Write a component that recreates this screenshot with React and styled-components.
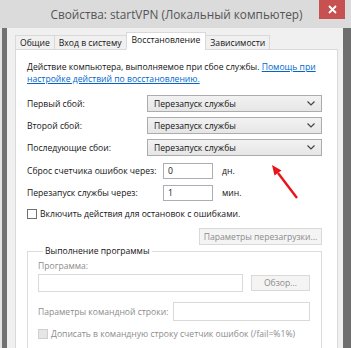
import React from 'react';
import styled, { createGlobalStyle } from 'styled-components';

const GlobalStyle = createGlobalStyle`
  html, body {
    margin: 0;
    padding: 0;
    background: #ffffff;
  }
  body {
    font-family: 'Open Sans', 'Noto Sans', sans-serif;
    font-size: 8.6px;
    color: #141414;
  }
`;

// --- window chrome ---
const Window = styled.div`
  width: 351px;
  height: 348px;
  overflow: hidden;
  display: flex;
  flex-direction: column;
  background: #f0f0f0;
`;

const TitleBar = styled.div`
  flex: none;
  height: 28px;
  display: flex;
  align-items: flex-start;
  padding-left: 34px;
  background: #dbdbdb;
`;

const Title = styled.div`
  flex: 1;
  text-align: center;
  line-height: 28px;
  font-size: 11.8px;
  color: #555555;
  white-space: nowrap;
`;

const CloseButton = styled.div`
  flex: none;
  width: 26px;
  height: 19px;
  margin-right: 6px;
  display: flex;
  align-items: center;
  justify-content: center;
  background: #c75050;
`;

const Frame = styled.div`
  flex: 1;
  min-height: 0;
  display: flex;
`;

const FrameEdge = styled.div`
  flex: none;
  width: ${p => p.$w}px;
  background: ${p => p.$color};
`;

const Client = styled.div`
  flex: 1;
  min-width: 0;
  display: flex;
  flex-direction: column;
  padding: 4px 5px 0 8px;
`;

// --- tabs ---
const TabStrip = styled.div`
  display: flex;
  align-items: flex-end;
  padding-left: 1px;
  margin-bottom: -1px;
  position: relative;
  z-index: 1;
`;

const Tab = styled.div`
  height: ${p => (p.$active ? 16 : 13)}px;
  line-height: 14px;
  padding: 0 ${p => (p.$active ? 5 : 4)}px;
  border: 1px solid #d9d9d9;
  border-bottom: ${p => (p.$active ? '1px solid #ffffff' : '1px solid #d9d9d9')};
  margin-left: -1px;
  background: ${p => (p.$active ? '#ffffff' : '#f0f0f0')};
  white-space: nowrap;
`;

const Panel = styled.div`
  flex: 1;
  position: relative;
  background: #ffffff;
  border: 1px solid #d9d9d9;
  padding: 11px 15px 0 11px;
  display: flex;
  flex-direction: column;
`;

// --- panel content ---
const Description = styled.p`
  margin: 0;
  line-height: 12px;
`;

const Link = styled.a`
  color: #0066cc;
  text-decoration: underline;
`;

const FormRow = styled.div`
  display: grid;
  grid-template-columns: ${p => p.$label}px auto 1fr;
  align-items: center;
  column-gap: 9px;
  margin-top: ${p => p.$top}px;
`;

const Label = styled.span`
  white-space: nowrap;
  color: ${p => (p.$disabled ? '#8c8c8c' : 'inherit')};
`;

const Combo = styled.div`
  grid-column: 2 / 4;
  height: 17px;
  box-sizing: border-box;
  display: flex;
  align-items: center;
  justify-content: space-between;
  padding: 0 6px;
  border: 1px solid #acacac;
  background: linear-gradient(#f2f2f2, #e6e6e6);
`;

const TextBox = styled.div`
  width: ${p => p.$w}px;
  height: ${p => p.$h}px;
  box-sizing: border-box;
  padding-left: 4px;
  line-height: ${p => p.$h - 2}px;
  border: 1px solid ${p => (p.$disabled ? '#d9d9d9' : '#abadb3')};
  background: #ffffff;
`;

const CheckRow = styled.label`
  display: flex;
  align-items: center;
  gap: 3px;
  margin-top: ${p => p.$top}px;
  color: ${p => (p.$disabled ? '#8c8c8c' : 'inherit')};
  white-space: nowrap;
`;

const CheckBox = styled.span`
  width: 10px;
  height: 10px;
  box-sizing: border-box;
  flex: none;
  border: 1px solid ${p => (p.$disabled ? '#cfcfcf' : '#707070')};
  background: ${p => (p.$disabled ? '#e6e6e6' : '#ffffff')};
`;

const ButtonRow = styled.div`
  display: flex;
  justify-content: flex-end;
  margin-top: ${p => p.$top}px;
`;

const Button = styled.div`
  height: ${p => p.$h}px;
  width: ${p => p.$w}px;
  box-sizing: border-box;
  display: flex;
  align-items: center;
  justify-content: center;
  border: 1px solid #d9d9d9;
  background: #f4f4f4;
  color: #8c8c8c;
  white-space: nowrap;
`;

const GroupBox = styled.fieldset`
  min-width: 0;
  margin: 0;
  padding: 2px 11px 9px 10px;
  border: 1px solid #dcdcdc;
  display: flex;
  flex-direction: column;
`;

const Legend = styled.legend`
  padding: 0 2px;
  margin-left: 5px;
  line-height: 13px;
`;

const InlineRow = styled.div`
  display: flex;
  align-items: center;
  justify-content: space-between;
  margin-top: ${p => p.$top}px;
`;

const Annotation = styled.svg`
  position: absolute;
  left: 246px;
  top: 110px;
  overflow: visible;
`;

function Chevron() {
  return (
    <svg width="8" height="5" viewBox="0 0 8 5">
      <polyline points="0.5,0.5 4,4 7.5,0.5" fill="none" stroke="#444" strokeWidth="1.2" />
    </svg>
  );
}

function ComboRow({ label, value, top }) {
  return (
    <FormRow $label={111} $top={top}>
      <Label>{label}</Label>
      <Combo>
        <span>{value}</span>
        <Chevron />
      </Combo>
    </FormRow>
  );
}

function NumberRow({ label, value, unit, top }) {
  return (
    <FormRow $label={127} $top={top}>
      <Label>{label}</Label>
      <TextBox $w={50} $h={16}>{value}</TextBox>
      <Label>{unit}</Label>
    </FormRow>
  );
}

export default function App() {
  const tabs = ['Общие', 'Вход в систему', 'Восстановление', 'Зависимости'];
  const active = 2;

  return (
    <Window>
      <GlobalStyle />
      <TitleBar>
        <Title>Свойства: startVPN (Локальный компьютер)</Title>
        <CloseButton>
          <svg width="9" height="9" viewBox="0 0 9 9">
            <path d="M1 1 L8 8 M8 1 L1 8" stroke="#fff" strokeWidth="1.8" />
          </svg>
        </CloseButton>
      </TitleBar>
      <Frame>
        <FrameEdge $w={2} $color="#e4e4e4" />
        <FrameEdge $w={5} $color="#727272" />
        <Client>
          <TabStrip>
            {tabs.map((t, i) => (
              <Tab key={t} $active={i === active}>{t}</Tab>
            ))}
          </TabStrip>
          <Panel>
            <Description>
              Действие компьютера, выполняемое при сбое службы.{' '}
              <Link>Помощь при настройке действий по восстановлению.</Link>
            </Description>

            <ComboRow label="Первый сбой:" value="Перезапуск службы" top={10} />
            <ComboRow label="Второй сбой:" value="Перезапуск службы" top={5} />
            <ComboRow label="Последующие сбои:" value="Перезапуск службы" top={5} />

            <NumberRow label="Сброс счетчика ошибок через:" value="0" unit="дн." top={7} />
            <NumberRow label="Перезапуск службы через:" value="1" unit="мин." top={6} />

            <CheckRow $top={7}>
              <CheckBox />
              Включить действия для остановок с ошибками.
            </CheckRow>

            <ButtonRow $top={8}>
              <Button $w={123} $h={17}>Параметры перезагрузки...</Button>
            </ButtonRow>

            <GroupBox>
              <Legend>Выполнение программы</Legend>
              <Label $disabled>Программа:</Label>
              <InlineRow $top={2}>
                <TextBox $w={205} $h={18} $disabled />
                <Button $w={59} $h={16}>Обзор...</Button>
              </InlineRow>
              <InlineRow $top={10}>
                <Label $disabled>Параметры командной строки:</Label>
                <TextBox $w={137} $h={19} $disabled />
              </InlineRow>
              <CheckRow $top={7} $disabled>
                <CheckBox $disabled />
                Дописать в командную строку счетчик ошибок (/fail=%1%)
              </CheckRow>
            </GroupBox>

            <Annotation width="40" height="42" viewBox="0 0 40 42">
              <line x1="35" y1="38" x2="16" y2="13" stroke="#e8141a" strokeWidth="2.4" />
              <polygon points="10,5 19.5,10.4 12.5,15.6" fill="#e8141a" />
            </Annotation>
          </Panel>
        </Client>
        <FrameEdge $w={8} $color="#6e6e6e" />
      </Frame>
    </Window>
  );
}
